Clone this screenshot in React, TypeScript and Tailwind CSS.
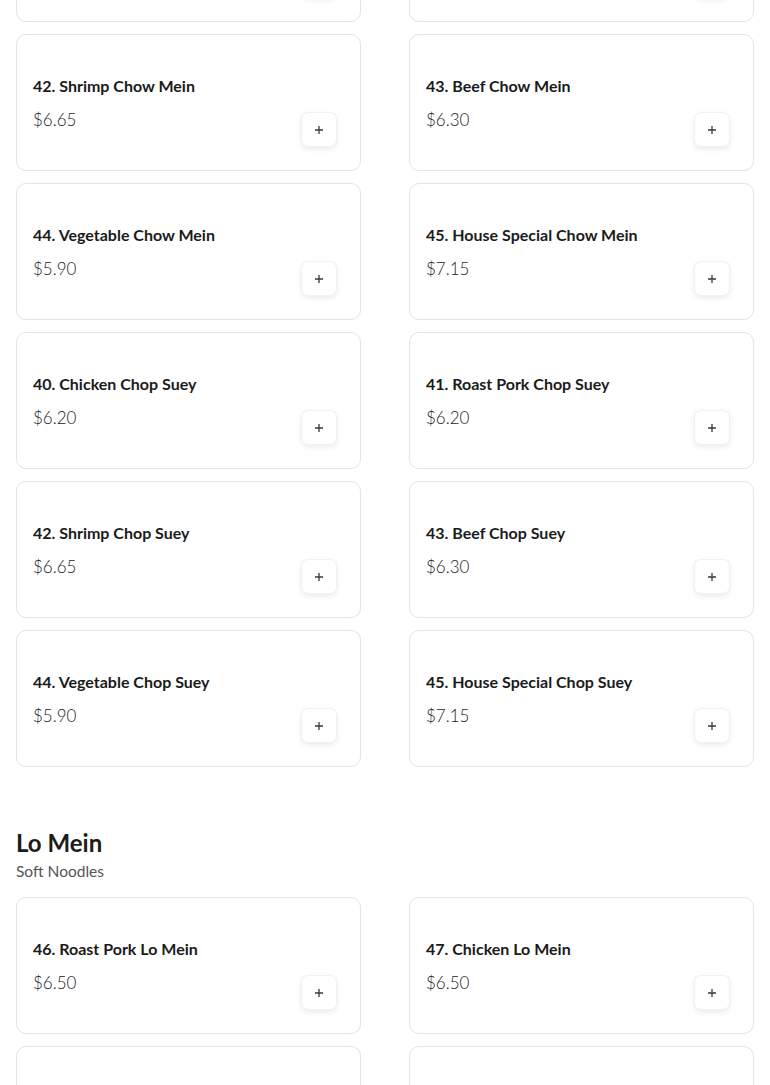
import React from "react";

type Item = { name: string; price: string };

const chowMein: Item[] = [
  { name: "42. Shrimp Chow Mein", price: "$6.65" },
  { name: "43. Beef Chow Mein", price: "$6.30" },
  { name: "44. Vegetable Chow Mein", price: "$5.90" },
  { name: "45. House Special Chow Mein", price: "$7.15" },
  { name: "40. Chicken Chop Suey", price: "$6.20" },
  { name: "41. Roast Pork Chop Suey", price: "$6.20" },
  { name: "42. Shrimp Chop Suey", price: "$6.65" },
  { name: "43. Beef Chop Suey", price: "$6.30" },
  { name: "44. Vegetable Chop Suey", price: "$5.90" },
  { name: "45. House Special Chop Suey", price: "$7.15" },
];

const loMein: Item[] = [
  { name: "46. Roast Pork Lo Mein", price: "$6.50" },
  { name: "47. Chicken Lo Mein", price: "$6.50" },
  { name: "", price: "" },
  { name: "", price: "" },
];

function AddButton() {
  return (
    <button className="mb-2 mr-2 flex h-[33px] w-[34px] items-center justify-center rounded-md bg-white shadow-[0_2px_6px_rgba(0,0,0,0.11)] ring-1 ring-[#f1f1f1]">
      <svg width="10" height="10" viewBox="0 0 10 10">
        <path d="M5 1v8M1 5h8" stroke="#3a3a3a" strokeWidth="1.3" />
      </svg>
    </button>
  );
}

function Card({ item }: { item: Item }) {
  return (
    <div className="flex h-[137px] items-stretch justify-between rounded-[10px] border border-[#e4e4e4] bg-white p-4">
      <div className="flex flex-col justify-center pt-[1px]">
        {item.name && (
          <>
            <div className="text-[16px] font-bold leading-6 text-[#1b1b1b]">{item.name}</div>
            <div className="mt-[10px] text-[17px] font-light leading-6 text-[#222]">{item.price}</div>
          </>
        )}
      </div>
      <div className="flex items-end">
        <AddButton />
      </div>
    </div>
  );
}

export default function App() {
  return (
    <div className="min-h-[1085px] overflow-hidden bg-white px-4" style={{ fontFamily: "Lato, 'Noto Sans', sans-serif" }}>
      <div className="-mt-[115px] grid grid-cols-2 gap-x-12 gap-y-3">
        <Card item={{ name: "", price: "" }} />
        <Card item={{ name: "", price: "" }} />
        {chowMein.map((it, i) => (
          <Card key={i} item={it} />
        ))}
      </div>
      <div className="mt-[60px]">
        <h2 className="text-[24px] font-bold leading-8 text-[#1b1b1b]">Lo Mein</h2>
        <p className="mt-[2px] text-[15.5px] leading-5 text-[#555]">Soft Noodles</p>
      </div>
      <div className="mt-4 grid grid-cols-2 gap-x-12 gap-y-3">
        {loMein.map((it, i) => (
          <Card key={i} item={it} />
        ))}
      </div>
    </div>
  );
}
